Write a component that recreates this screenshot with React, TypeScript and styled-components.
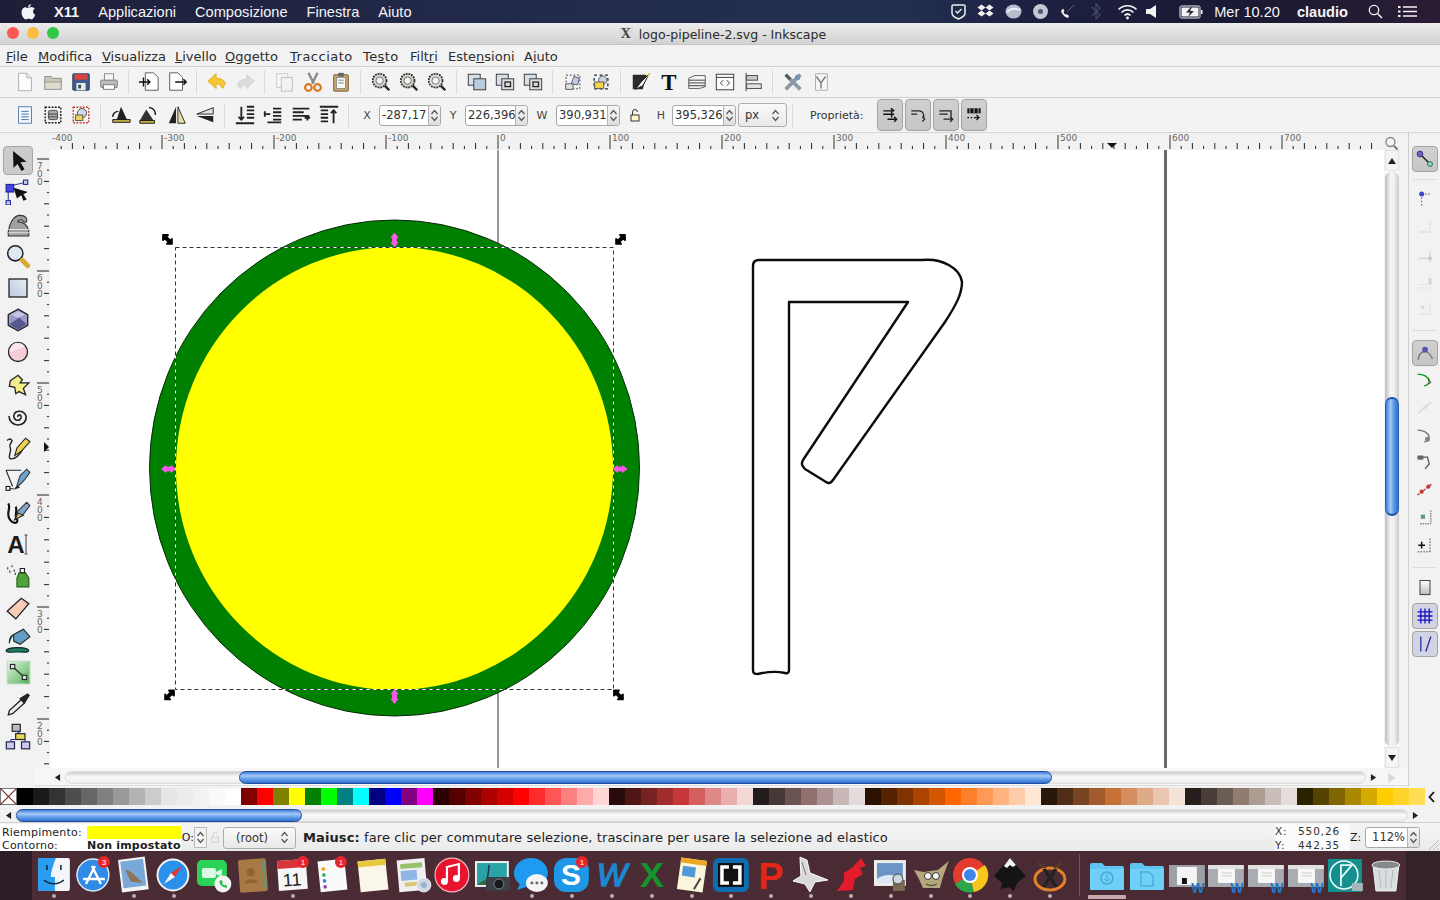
import React from 'react';
import styled, {createGlobalStyle} from 'styled-components';

const GlobalStyle = createGlobalStyle`
  html, body { margin: 0; padding: 0; background: #2a1e26; }
  * { box-sizing: border-box; }
`;

const GTK_FONT = `'DejaVu Sans', 'Liberation Sans', sans-serif`;
const MAC_FONT = `'Liberation Sans', Arial, sans-serif`;

const Screen = styled.div`
  width: 1440px;
  height: 900px;
  overflow: hidden;
  display: flex;
  flex-direction: column;
  font-family: ${GTK_FONT};
`;

/* ---------- mac menu bar ---------- */
const MacBar = styled.div`
  height: 23px;
  flex-shrink: 0;
  display: flex;
  align-items: center;
  padding-left: 20px;
  color: #f4f5f8;
  font: 14.6px ${MAC_FONT};
  background: linear-gradient(90deg, #1e1e38, #222a4b 35%, #233052 62%, #1d2040 72%, #1a1a34 85%, #2a1c34);
`;
const AppleSlot = styled.div`
  width: 22px;
  height: 18px;
  margin-right: 12px;
`;
const MacItem = styled.span<{$bold?: boolean; $gap: number}>`
  font-weight: ${p => (p.$bold ? 700 : 400)};
  margin-right: ${p => p.$gap}px;
`;
const MacSpacer = styled.div`
  flex: 1;
`;
const StatusGlyph = styled.svg<{$gap: number}>`
  flex-shrink: 0;
  margin-right: ${p => p.$gap}px;
`;

/* ---------- window ---------- */
const Win = styled.div`
  height: 828px;
  flex-shrink: 0;
  display: flex;
  flex-direction: column;
  background: #f2f2f2;
  color: #1c1c1c;
`;
const TitleBar = styled.div`
  height: 22px;
  flex-shrink: 0;
  position: relative;
  display: flex;
  align-items: center;
  justify-content: center;
  gap: 6px;
  padding: 1px 0 0 5px;
  font: 12.5px ${GTK_FONT};
  color: #2a2a2a;
  background: linear-gradient(#ececec, #d2d2d2);
  border-bottom: 1px solid #c4c4c4;
  border-radius: 4px 4px 0 0;
`;
const Lights = styled.div`
  position: absolute;
  left: 7px;
  top: 4px;
  display: flex;
  gap: 8px;
`;
const Light = styled.span<{$c: string}>`
  width: 12px;
  height: 12px;
  border-radius: 50%;
  background: ${p => p.$c};
`;
const XBadge = styled.span`
  width: 14px;
  height: 14px;
  background: #dcdcdc;
  font: 700 14px/14px 'Liberation Serif', serif;
  text-align: center;
  color: #444;
`;
const MenuRow = styled.div`
  height: 21px;
  flex-shrink: 0;
  display: flex;
  align-items: center;
  padding: 1px 0 0 6px;
  font-size: 13px;
  color: #2c2c2c;
`;
const MenuItem = styled.span<{$w: number; $ls?: number}>`
  width: ${p => p.$w}px;
  flex-shrink: 0;
  white-space: nowrap;
  letter-spacing: ${p => p.$ls ?? 0}px;
`;
const Toolbar = styled.div<{$h: number}>`
  height: ${p => p.$h}px;
  flex-shrink: 0;
  display: flex;
  align-items: center;
  position: relative;
  border-top: 1px solid #d2d2d2;
  padding-left: 11px;
  background: #f3f3f3;
`;
const Grip = styled.div`
  position: absolute;
  left: 3px;
  top: 5px;
  bottom: 5px;
  width: 6px;
  background-image: radial-gradient(#cfcfcf 40%, transparent 45%);
  background-size: 2px 2px;
`;
const Slot = styled.div`
  width: 28px;
  height: 24px;
  flex-shrink: 0;
  display: flex;
  align-items: center;
  justify-content: center;
`;
const Sep = styled.div`
  width: 12px;
  height: 24px;
  flex-shrink: 0;
  position: relative;
  &::after {
    content: '';
    position: absolute;
    left: 5px;
    top: 0;
    bottom: 0;
    width: 1px;
    background: #d9d9d9;
  }
`;
const FieldLabel = styled.span<{$w: number}>`
  width: ${p => p.$w}px;
  flex-shrink: 0;
  font-size: 11px;
  color: #444;
  text-align: center;
`;
const SpinBox = styled.div<{$w: number}>`
  width: ${p => p.$w}px;
  height: 21px;
  flex-shrink: 0;
  display: flex;
  border: 1px solid #a8a8a8;
  border-radius: 3px;
  background: #fff;
  overflow: hidden;
`;
const SpinText = styled.div<{$right?: boolean}>`
  flex: 1;
  min-width: 0;
  overflow: hidden;
  white-space: nowrap;
  padding: 0 2px;
  font-size: 11.5px;
  line-height: 19px;
  color: #333;
  text-align: ${p => (p.$right ? 'right' : 'left')};
`;
const SpinArrows = styled.div`
  width: 12px;
  flex-shrink: 0;
  border-left: 1px solid #b5b5b5;
  background: linear-gradient(#f6f6f6, #dedede);
  display: flex;
  align-items: center;
  justify-content: center;
`;
const Combo = styled.div<{$w: number; $h: number; $ml?: number; $pl?: number}>`
  width: ${p => p.$w}px;
  height: ${p => p.$h}px;
  margin-left: ${p => p.$ml ?? 0}px;
  flex-shrink: 0;
  display: flex;
  align-items: center;
  justify-content: space-between;
  padding: 0 6px 0 ${p => p.$pl ?? 6}px;
  font-size: 11.5px;
  color: #333;
  border: 1px solid #adadad;
  border-radius: 3px;
  background: linear-gradient(#f9f9f9, #e9e9e9);
`;
const LockSlot = styled.div`
  width: 30px;
  flex-shrink: 0;
  display: flex;
  justify-content: center;
`;
const PropLabel = styled.span`
  margin: 0 11px 0 11px;
  width: 56px;
  flex-shrink: 0;
  font-size: 11px;
  color: #333;
  white-space: nowrap;
`;
const PropButtons = styled.div`
  display: flex;
  gap: 2px;
`;
const ToggleBtn = styled.div<{$w: number; $h: number; $tint?: boolean}>`
  width: ${p => p.$w}px;
  height: ${p => p.$h}px;
  flex-shrink: 0;
  display: flex;
  align-items: center;
  justify-content: center;
  border: 1px solid #a3a3a3;
  border-radius: 4px;
  background: ${p => (p.$tint ? '#d3d3e4' : 'linear-gradient(#d0d0d0, #c6c6c6)')};
`;

/* ---------- work area ---------- */
const Main = styled.div`
  height: 654px;
  flex-shrink: 0;
  display: flex;
  border-top: 1px solid #d6d6d6;
`;
const ToolBox = styled.div`
  width: 34px;
  flex-shrink: 0;
  padding: 13px 0 0 1px;
  display: flex;
  flex-direction: column;
  align-items: center;
`;
const ToolCell = styled.div<{$on?: boolean}>`
  width: 30px;
  height: 32px;
  flex-shrink: 0;
  display: flex;
  align-items: center;
  justify-content: center;
  ${p => p.$on && 'height: 29px; margin-bottom: 1px; background: #cbcbcb; border: 1px solid #a5a5a5; border-radius: 4px;'}
`;
const Center = styled.div`
  width: 1374px;
  flex-shrink: 0;
  display: flex;
  flex-direction: column;
`;
const RulerRow = styled.div`
  height: 17px;
  flex-shrink: 0;
  display: flex;
`;
const ViewRow = styled.div`
  height: 618px;
  flex-shrink: 0;
  display: flex;
`;
const Paper = styled.svg`
  display: block;
  flex-shrink: 0;
  background: #fff;
`;
const RulerSvg = styled.svg`
  display: block;
  flex-shrink: 0;
`;
const VBarCol = styled.div`
  width: 14px;
  margin-left: 1px;
  flex-shrink: 0;
  display: flex;
  flex-direction: column;
  background: #fff;
`;
const ArrowCell = styled.div`
  height: 21px;
  flex-shrink: 0;
  display: flex;
  align-items: center;
  justify-content: center;
  background: #f4f4f4;
  border: 1px solid #e0e0e0;
`;
const VTrack = styled.div`
  flex: 1;
  display: flex;
  flex-direction: column;
  border-radius: 7px;
  background: linear-gradient(90deg, #bdbdbd, #f5f5f5 40%, #f0f0f0 65%, #c9c9c9);
`;
const VThumb = styled.div`
  height: 119px;
  margin-top: 226px;
  border-radius: 7px;
  border: 1px solid #2a5fb4;
  border-top: 2px solid #1d4fa8;
  border-bottom: 2px solid #1d4fa8;
  background: linear-gradient(90deg, #3f80dc, #a6c9f5 40%, #64a0ea 60%, #2f6fd0);
`;
const HBarRow = styled.div`
  height: 18px;
  flex-shrink: 0;
  display: flex;
  align-items: center;
  padding: 2px 0 0 16px;
  border-bottom: 1px solid #dcdcdc;
  background: #f6f6f6;
`;
const HArrow = styled.div<{$w: number}>`
  width: ${p => p.$w}px;
  height: 100%;
  flex-shrink: 0;
  display: flex;
  align-items: center;
  justify-content: center;
`;
const HTrack = styled.div<{$w: number}>`
  width: ${p => p.$w}px;
  height: 13px;
  flex-shrink: 0;
  display: flex;
  border-radius: 7px;
  border: 1px solid #dcdcdc;
  background: linear-gradient(#cdcdcd, #fafafa 45%, #ececec);
`;
const HThumb = styled.div<{$x: number; $w: number}>`
  width: ${p => p.$w}px;
  margin-left: ${p => p.$x}px;
  margin-top: -1px;
  height: 13px;
  border-radius: 7px;
  border: 1px solid #1f4f9c;
  background: linear-gradient(#3f7fd8, #a5c8f5 35%, #6ea6ec 60%, #2f6fd0);
`;
const RightBar = styled.div`
  flex: 1;
  display: flex;
  flex-direction: column;
  align-items: center;
  position: relative;
  padding-top: 12px;
  border-left: 1px solid #cfcfcf;
`;
const RightGrip = styled.div`
  position: absolute;
  top: 3px;
  left: 4px;
  right: 4px;
  height: 5px;
  background-image: radial-gradient(#d2d2d2 40%, transparent 45%);
  background-size: 2px 2px;
`;
const SnapCell = styled.div<{$h: number}>`
  height: ${p => p.$h}px;
  flex-shrink: 0;
  display: flex;
  align-items: center;
  justify-content: center;
`;
const Hairline = styled.div`
  width: 24px;
  height: 1px;
  background: #dcdcdc;
`;

/* ---------- palette and status ---------- */
const PaletteRow = styled.div`
  height: 20px;
  flex-shrink: 0;
  display: flex;
  align-items: center;
  padding-top: 1px;
`;
const NoColor = styled.svg`
  flex-shrink: 0;
  display: block;
`;
const Swatch = styled.div`
  width: 16px;
  height: 17px;
  flex-shrink: 0;
`;
const PaletteChevron = styled.div`
  width: 13px;
  flex-shrink: 0;
  display: flex;
  justify-content: center;
`;
const PalScroll = styled.div`
  height: 17px;
  flex-shrink: 0;
  display: flex;
  align-items: center;
  padding: 3px 0 0 2px;
  border-bottom: 1px solid #cfcfcf;
`;
const StatusBar = styled.div`
  height: 28px;
  flex-shrink: 0;
  display: flex;
  align-items: center;
  position: relative;
  padding-top: 1px;
  background: linear-gradient(#f4f4f4, #ebebeb);
`;
const StylePane = styled.div`
  width: 181px;
  height: 100%;
  flex-shrink: 0;
  position: relative;
  background: #fff;
  padding: 2px 0 0 2px;
  font-size: 11px;
  line-height: 13px;
  letter-spacing: 0.2px;
  display: grid;
  grid-template-columns: 85px 94px;
`;
const StyleSwatch = styled.div`
  height: 13px;
  background: #ffff00;
`;
const StyleNone = styled.div`
  font-weight: 700;
  white-space: nowrap;
`;
const OpacityLabel = styled.span`
  font-size: 11px;
  width: 13px;
  flex-shrink: 0;
  overflow: hidden;
  display: flex;
  justify-content: flex-end;
`;
const MiniSpin = styled.div`
  width: 13px;
  height: 21px;
  flex-shrink: 0;
  border: 1px solid #bdbdbd;
  background: #f3f3f3;
  display: flex;
  align-items: center;
  justify-content: center;
`;
const MiniLock = styled.div`
  width: 16px;
  flex-shrink: 0;
  display: flex;
  justify-content: center;
`;
const Message = styled.div`
  margin-left: 7px;
  font-size: 13px;
  letter-spacing: 0.1px;
  width: 972px;
  flex-shrink: 0;
  white-space: nowrap;
  color: #222;
`;
const CoordPane = styled.div`
  width: 75px;
  height: 100%;
  flex-shrink: 0;
  display: grid;
  grid-template-columns: 23px 1fr;
  align-content: center;
  font-size: 10.5px;
  line-height: 14px;
  letter-spacing: 0.9px;
  color: #333;
  background: #fbfbfb;
`;
const ZoomLabel = styled.span`
  width: 15px;
  flex-shrink: 0;
  font-size: 11px;
`;
const CornerGrip = styled.svg`
  position: absolute;
  right: 0;
  bottom: 0;
`;

/* ---------- dock ---------- */
const Dock = styled.div`
  height: 49px;
  flex-shrink: 0;
  display: flex;
  padding-left: 34px;
  background: linear-gradient(90deg, #2c1e26 0, #2c1e26 32px, #4b2c34 32px, #4a2b33 1406px, #33222a 1406px);
`;
const DockItem = styled.div`
  width: 39.85px;
  flex-shrink: 0;
  position: relative;
  padding-top: 4px;
  display: flex;
  justify-content: center;
`;
const DockDot = styled.span`
  position: absolute;
  bottom: 2px;
  left: 18px;
  width: 4px;
  height: 4px;
  border-radius: 50%;
  background: #b9b0b3;
`;
const DockBar = styled.span`
  position: absolute;
  bottom: 1px;
  left: 1px;
  width: 38px;
  height: 4px;
  border-radius: 1px;
  background: #c9a9ae;
`;
const DockDivider = styled.div`
  width: 1px;
  flex-shrink: 0;
  margin: 3px 7px 4px 9px;
  background: #6f5a5f;
`;

/* ---------- small drawings ---------- */
type GlyphProps = {s?: number; children: React.ReactNode};
const G = ({s = 22, children}: GlyphProps) => (
  <svg width={s} height={s} viewBox="0 0 24 24">
    {children}
  </svg>
);

const Lens = ({c = '#d8d8d8'}: {c?: string}) => (
  <>
    <circle cx="10.5" cy="10.5" r="7.5" fill={c} stroke="#333" strokeWidth="2" strokeDasharray="2 1" />
    <circle cx="10.5" cy="10.5" r="4" fill="#f4f4f4" stroke="#666" />
    <path d="M16 16l5 5" stroke="#222" strokeWidth="2.6" />
  </>
);
const Page = ({x = 5, y = 2, w = 14, h = 19}: {x?: number; y?: number; w?: number; h?: number}) => (
  <path
    d={`M${x} ${y}h${w - 5}l5 5v${h - 5}h-${w}z`}
    fill="#fff"
    stroke="#555"
  />
);
const Boxes = ({lock}: {lock?: boolean}) => (
  <>
    <rect x="2.5" y="3.5" width="13" height="12" fill="#d5e0ec" stroke="#333" />
    <rect x="8.5" y="8.5" width="13" height="12" fill={lock ? '#ddd' : '#b9cde2'} stroke="#333" />
    {lock && <rect x="12" y="12" width="6" height="5" fill="none" stroke="#222" strokeWidth="1.4" />}
  </>
);
const AlignBars = ({d}: {d: string}) => (
  <path d={d} stroke="#222" strokeWidth="2" fill="none" />
);

const topTools: (React.ReactNode | null)[][] = [
  [
    <G key="n"><path d="M5 2.5h9l5 5v14H5z" fill="#fdfdfd" stroke="#aaa" /><path d="M14 2.5v5h5" fill="#eee" stroke="#aaa" /></G>,
    <G key="o"><path d="M3 6h7l2 2h9v12H3z" fill="#c9c9b5" stroke="#888" /><path d="M3 12h18v8H3z" fill="#dedccc" stroke="#999" /></G>,
    <G key="s"><rect x="3" y="3" width="18" height="18" rx="1" fill="#3c5a8c" stroke="#273a5c" /><rect x="5" y="3.5" width="14" height="6" fill="#d8433c" /><rect x="7" y="13" width="10" height="8" fill="#e8e8e8" /><rect x="9" y="15" width="3" height="4" fill="#345" /></G>,
    <G key="p"><rect x="7" y="3" width="10" height="8" fill="#f5f5f5" stroke="#888" /><rect x="3" y="10" width="18" height="8" rx="1" fill="#bdbdbd" stroke="#777" /><rect x="6" y="15" width="12" height="5" fill="#fff" stroke="#777" /></G>,
  ],
  [
    <G key="i"><Page x={8} /><path d="M1 12h12M10 9l3 3-3 3M6 7v10" stroke="#111" strokeWidth="1.5" fill="none" /></G>,
    <G key="e"><Page x={4} /><path d="M10 12h12M19 9l3 3-3 3" stroke="#111" strokeWidth="1.6" fill="none" /></G>,
  ],
  [
    <G key="u"><path d="M2 11l9-8v5c6 0 10 3 10 6l-3 5c-2-3-3-5-7-5v5z" fill="#f5c832" stroke="#e2a726" /></G>,
    <G key="r"><path d="M22 11l-8-7v5c-5 0-10 2-10 6l3 4c2-3 3-4 7-4v4z" fill="#dcdcdc" stroke="#cfcfcf" /></G>,
  ],
  [
    <G key="c"><rect x="3" y="3" width="12" height="15" fill="#f7f7f7" stroke="#c8c8c8" /><rect x="8" y="7" width="12" height="15" fill="#f2f2f2" stroke="#bdbdbd" /></G>,
    <G key="x"><path d="M7 2l6 12M17 2l-6 12" stroke="#8a8a8a" strokeWidth="2.6" /><circle cx="7" cy="18" r="3.6" fill="none" stroke="#d8781c" strokeWidth="2.4" /><circle cx="17" cy="18" r="3.6" fill="none" stroke="#d8781c" strokeWidth="2.4" /></G>,
    <G key="v"><rect x="4" y="4" width="16" height="18" rx="1" fill="#c9a76a" stroke="#6e5a33" /><rect x="7" y="7" width="10" height="12" fill="#fbfbf5" stroke="#888" /><rect x="9" y="2" width="6" height="4" fill="#666" /><path d="M9 10h6M9 13h6" stroke="#777" /></G>,
  ],
  [
    <G key="z1"><Lens /></G>,
    <G key="z2"><Lens c="#cfd8c8" /></G>,
    <G key="z3"><Lens c="#e2e2e2" /></G>,
  ],
  [
    <G key="d"><Boxes /></G>,
    <G key="cl"><Boxes lock /></G>,
    <G key="ul"><Boxes lock /></G>,
  ],
  [
    <G key="g"><rect x="4.5" y="4.5" width="15" height="15" fill="none" stroke="#333" strokeDasharray="2 2" /><path d="M10 14l3-8 6 2-2 7z" fill="#b9cde2" stroke="#556" /><path d="M4 14h8v6H4z" fill="#e2e2e2" stroke="#555" /></G>,
    <G key="ug"><rect x="4.5" y="4.5" width="15" height="15" fill="none" stroke="#222" strokeDasharray="3 3" strokeWidth="1.4" /><circle cx="14" cy="10" r="4.5" fill="#c8d4e0" stroke="#555" /><rect x="5" y="12" width="10" height="7" fill="#f1d44a" stroke="#555" /></G>,
  ],
  [
    <G key="fs"><path d="M3 4h15l-4 16H3z" fill="#2a2a2a" /><path d="M6 20l6-8 9-9-7 13z" fill="#f2f2f2" stroke="#111" /><path d="M20 2l2 2-3 3z" fill="#e6d23c" /></G>,
    <svg key="t" width="22" height="22" viewBox="0 0 24 24"><text x="12" y="21" textAnchor="middle" fontFamily="'Liberation Serif', serif" fontWeight="700" fontSize="25" fill="#111">T</text></svg>,
    <G key="l"><path d="M3 8l6-3h12v12l-6 2H3z" fill="#f6f6f6" stroke="#555" /><path d="M3 10h18M3 13h18M3 16h18" stroke="#333" /></G>,
    <G key="xm"><rect x="2.5" y="3.5" width="19" height="17" fill="#fbfbfb" stroke="#333" /><path d="M2.5 7h19" stroke="#333" /><path d="M10 10l-3 3 3 3M14 10l3 3-3 3" stroke="#333" fill="none" /></G>,
    <G key="al"><path d="M4.500 2v20" stroke="#333" /><rect x="5" y="5" width="12" height="5" fill="#c9c9c9" stroke="#444" /><rect x="5" y="14" width="16" height="5" fill="#e5e5e5" stroke="#444" /></G>,
  ],
  [
    <G key="pr"><path d="M4 4l16 16M20 4L4 20" stroke="#8c9aa8" strokeWidth="4" /><circle cx="17" cy="7" r="3" fill="#7a93b0" /><path d="M4 4l5 5" stroke="#555" strokeWidth="3" /></G>,
    <G key="dp"><path d="M6 3h13v18H6z" fill="#f6f6f6" stroke="#aaa" /><path d="M7 6l5 7 5-7M12 13v6" stroke="#777" strokeWidth="1.5" fill="none" /></G>,
  ],
];

const objectTools: React.ReactNode[][] = [
  [
    <G key="a"><rect x="5" y="3" width="14" height="18" fill="#f5f9ff" stroke="#4a78a8" /><path d="M8 8h8M8 11h8M8 14h8M8 17h8" stroke="#3a6a9c" /></G>,
    <G key="b"><rect x="3.500" y="3.500" width="17" height="17" fill="none" stroke="#111" strokeWidth="1.500" strokeDasharray="2 1.500" /><rect x="7" y="7" width="10" height="10" rx="2" fill="#aaa" stroke="#444" /><path d="M7 11h10M7 14h10" stroke="#444" /></G>,
    <G key="c"><rect x="3.500" y="3.500" width="17" height="17" fill="none" stroke="#c0392b" strokeWidth="1.500" strokeDasharray="2 1.500" /><circle cx="13" cy="10" r="5" fill="#cddbea" stroke="#444" /><rect x="6" y="12" width="8" height="6" fill="#f0cf56" stroke="#555" /></G>,
  ],
  [
    <G key="r1"><path d="M12 3l7 15H7z" fill="#222" /><path d="M14 17h8v3H3v-3z" fill="#c8b24a" stroke="#111" /><path d="M3 14a6 6 0 016-6" fill="none" stroke="#111" strokeWidth="1.500" /></G>,
    <G key="r2"><path d="M9 6l8 12H2z" fill="#333" /><path d="M2 18h16v3H2z" fill="#c8b24a" stroke="#111" /><path d="M12 4a7 7 0 017 8" fill="none" stroke="#111" strokeWidth="1.500" /></G>,
    <G key="f1"><path d="M11 3v18H3z" fill="#222" /><path d="M13 3v18h8z" fill="#e8dfa8" stroke="#222" /></G>,
    <G key="f2"><path d="M21 4v7H3z" fill="#e0e0e0" stroke="#222" /><path d="M21 20v-7H3z" fill="#222" /></G>,
  ],
  [
    <G key="a1"><AlignBars d="M14 3h8M14 7h8M14 11h8M14 15h8M8 3v14M5 14l3 3 3-3M2 21h20" /></G>,
    <G key="a2"><AlignBars d="M12 5h9M12 9h9M12 13h9M12 17h9M3 11h6M3 8v6M6 20h15" /></G>,
    <G key="a3"><AlignBars d="M3 5h18M3 9h12M3 13h18M3 17h10M16 15h6M19 12v6" /></G>,
    <G key="a4"><AlignBars d="M2 3h20M3 7h8M3 11h8M3 15h8M3 19h8M17 21V7M14 10l3-3 3 3" /></G>,
  ],
];

const pathModes = [
  <G key="1" s={20}><path d="M4 7h13M4 11h13M13 4l4 3M9 17h11M17 14l3 3-3 3M14 7v8" stroke="#111" strokeWidth="1.700" fill="none" /></G>,
  <G key="2" s={20}><path d="M4 7h9c5 0 6 3 6 9M4 11h7M17 14l3 3-3 3" stroke="#222" strokeWidth="1.500" fill="none" /></G>,
  <G key="3" s={20}><path d="M4 7h14v8M4 11h10M9 17h11M17 14l3 3-3 3" stroke="#222" strokeWidth="1.600" fill="none" /></G>,
  <G key="4" s={20}><rect x="4" y="4" width="16" height="6" fill="#111" /><path d="M7 4v6M12 4v6M17 4v6" stroke="#ccc" /><path d="M4 15h2M8 15h2M12 15h5M15 12l3 3-3 3" stroke="#111" strokeWidth="1.500" fill="none" /></G>,
];

const toolIcons: React.ReactNode[] = [
  <G key="sel" s={24}><path d="M7 2l.5 17 4-4 4 7 3-1.800-4-7 6-.500z" fill="#111" /></G>,
  <G key="node" s={26}><path d="M3 7l16-4M3 7v14" stroke="#34a" fill="none" /><rect x="1" y="5" width="7" height="7" fill="#44e" stroke="#228" /><rect x="17" y="1" width="4" height="4" fill="#ccd" stroke="#22a" /><rect x="1" y="20" width="4" height="4" fill="#ccd" stroke="#22a" /><path d="M8 8l13 4-4 2 3 5-3 1-2-5-4 3z" fill="#111" /></G>,
  <G key="tweak" s={26}><path d="M3 19c1-8 5-15 11-15 5 0 7 3 6 6-2 1-4-1-5-2-2 0-3 1-3 2 3 0 8 1 10 8v5H3z" fill="#a0a0a0" stroke="#333" /><path d="M3 17h20M3 20h20" stroke="#e2e2e2" /></G>,
  <G key="zoom" s={26}><circle cx="9.500" cy="9.500" r="7" fill="#dfe9f5" stroke="#222" strokeWidth="1.400" /><path d="M14.500 14.500l2 2" stroke="#222" strokeWidth="1.400" /><path d="M16 16l5 5" stroke="#d9a93a" strokeWidth="4.500" strokeLinecap="round" /></G>,
  <G key="rect" s={24}><defs><linearGradient id="rg" x1="0" y1="1" x2="1" y2="0"><stop offset="0" stopColor="#b9c9dc" /><stop offset="1" stopColor="#e6edf5" /></linearGradient></defs><rect x="3" y="3" width="18" height="18" fill="url(#rg)" stroke="#222" strokeWidth="1.300" /></G>,
  <G key="box" s={26}><path d="M12 2l9 5v10l-9 5-9-5V7z" fill="#9b9bc8" stroke="#222" strokeWidth="1.200" /><path d="M4 16l9-6 7 6-8 5z" fill="#57578f" /><path d="M5 7l7-3 7 3-7 3z" fill="#c6c6e2" /></G>,
  <G key="ell" s={24}><circle cx="12" cy="12" r="9.500" fill="#f7cdd8" stroke="#222" strokeWidth="1.300" /><path d="M4 12a8 8 0 0115-5" fill="#fbe6ec" /></G>,
  <G key="star" s={26}><path d="M5 9l7-5 4 4-2 3 8 0-5 5 2 6-6-3-3 2-1-6-5-1z" fill="#f2ec8a" stroke="#222" strokeWidth="1.200" /></G>,
  <G key="spiral" s={24}><path d="M12 13c-1-2 2-3 3-1 1 3-2 5-5 4-3-2-3-6 0-8 4-2 9 0 10 4 1 5-3 9-8 9s-9-4-9-9" fill="none" stroke="#222" strokeWidth="1.600" /></G>,
  <G key="pencil" s={26}><path d="M2 5c3-3 6 0 3 3-2 3 1 3 0 7s-2 7 1 7 7-3 10-8" fill="none" stroke="#222" strokeWidth="1.300" /><path d="M9 19l2-7 8-9 4 3-8 9z" fill="#f0d050" stroke="#222" /></G>,
  <G key="pen" s={26}><path d="M1 3h14M1 3l6 15M2 20h6" stroke="#222" fill="none" /><rect x="1" y="18" width="3.500" height="3.500" fill="#fff" stroke="#111" /><path d="M11 17l3-9 6-6 3 3-5 7-6 6z" fill="#6ea6c8" stroke="#334" /><path d="M8 21l3-4 3 2z" fill="#222" /></G>,
  <G key="cal" s={26}><path d="M3 4c2 3 0 6 0 10s3 8 6 8 3-3 1-6c0-3 1-6 0-9" fill="none" stroke="#111" strokeWidth="2" /><path d="M9 19l3-8 8-8 3 3-6 8z" fill="#7fa5c8" stroke="#334" /><path d="M9 19l3-6 5 2z" fill="#e0c070" stroke="#222" /></G>,
  <svg key="text" width="26" height="26" viewBox="0 0 26 26"><text x="11" y="22" textAnchor="middle" fontFamily="'Liberation Sans', sans-serif" fontWeight="700" fontSize="24" fill="#1c1c1c">A</text><path d="M21 4v19M19.500 4h3M19.500 23h3" stroke="#444" strokeWidth="1" /></svg>,
  <G key="spray" s={26}><path d="M2 5h1M6 3h1M4 8h1M8 7h1M9 10h1" stroke="#333" strokeWidth="2" /><path d="M13 9h6l3 5v8H11v-8z" fill="#4fa33a" stroke="#1f5c18" /><path d="M14 5h4v4h-4z" fill="none" stroke="#222" /></G>,
  <G key="eraser" s={26}><path d="M2 15L15 3l7 5-12 14z" fill="#f7cdb8" stroke="#222" strokeWidth="1.200" /></G>,
  <G key="bucket" s={26}><path d="M8 7l9-5 6 7-9 7-6-3z" fill="#5f9dc2" stroke="#222" /><path d="M8 7c-3 1-4 5-4 8M1 22c0-2 6-3 11-3s10 1 10 3-6 1-10 1-11 1-11-1z" fill="#1e7d5c" stroke="#123" /></G>,
  <G key="grad" s={26}><defs><linearGradient id="gg" x1="1" y1="1" x2="0" y2="0"><stop offset="0" stopColor="#4caf50" /><stop offset="1" stopColor="#e8f5e8" /></linearGradient></defs><rect x="2" y="2" width="21" height="21" fill="url(#gg)" stroke="#c5d5c5" /><path d="M7 7l11 10" stroke="#444" strokeWidth="1.400" /><rect x="5" y="5" width="4" height="4" fill="#ddd" stroke="#222" /><rect x="16" y="15" width="4" height="4" fill="#ddd" stroke="#222" /></G>,
  <G key="drop" s={26}><path d="M3 22l1-4L15 8l3 3L7 21z" fill="#eee" stroke="#222" strokeWidth="1.200" /><path d="M13 7l8-5 2 2-5 8z" fill="#222" /></G>,
  <G key="conn" s={28}><rect x="7" y="2" width="7" height="6" fill="#b9b9c8" stroke="#222" /><rect x="10" y="10" width="8" height="5" fill="#e6d95a" stroke="#222" /><rect x="2" y="17" width="7" height="6" fill="#c9c9ee" stroke="#224" /><rect x="15" y="17" width="7" height="6" fill="#c9c9ee" stroke="#224" /><path d="M11 8l3 2M6 17v-2h4M18 17v-2" stroke="#33a" fill="none" /></G>,
];

const Tri = ({dir, c = '#222', s = 8}: {dir: 'u' | 'd' | 'l' | 'r'; c?: string; s?: number}) => {
  const d = {u: 'M4 1l4 6H0z', d: 'M4 7L0 1h8z', l: 'M1 4l6-4v8z', r: 'M7 4L1 0v8z'}[dir];
  return (
    <svg width={s} height={s} viewBox="0 0 8 8">
      <path d={d} fill={c} />
    </svg>
  );
};

const Updown = ({h = 15}: {h?: number}) => (
  <svg width="9" height={h} viewBox="0 0 9 15">
    <path d="M1.500 6l3-3.500 3 3.500M1.500 9l3 3.500 3-3.500" fill="none" stroke="#555" strokeWidth="1.200" />
  </svg>
);

const snapIcons: {h: number; on?: 'gray' | 'tint'; el: React.ReactNode}[] = [
  {h: 28, on: 'gray', el: <G s={20}><path d="M6 6l12 12" stroke="#111" strokeWidth="1.500" /><circle cx="6" cy="6" r="3.500" fill="#7a5ac8" stroke="#33286a" /><circle cx="18" cy="18" r="3" fill="#9cc" stroke="#264" /></G>},
  {h: 12, el: <Hairline />},
  {h: 28, el: <G s={20}><path d="M8 6h12" stroke="#444" strokeDasharray="2 2" /><path d="M8 6v16" stroke="#339" strokeDasharray="2 2" /><circle cx="8" cy="6" r="3" fill="#44c" /></G>},
  {h: 28, el: <G s={20}><path d="M18 4v14H6" stroke="#ddd" strokeWidth="1.600" fill="none" strokeDasharray="3 1" /></G>},
  {h: 28, el: <G s={20}><path d="M4 16h14M18 8v12" stroke="#d3d3d3" strokeWidth="1.600" /><circle cx="18" cy="16" r="2.500" fill="#ccc" /></G>},
  {h: 28, el: <G s={20}><path d="M4 18h14M4 14h14" stroke="#ddd" strokeDasharray="3 1" /><rect x="16" y="6" width="4" height="8" fill="#d5d5d5" /></G>},
  {h: 24, el: <G s={20}><path d="M18 4v14H6" stroke="#dcdcdc" fill="none" /><rect x="7" y="8" width="4" height="4" fill="#d9d9d9" /></G>},
  {h: 18, el: <Hairline />},
  {h: 27, on: 'gray', el: <G s={20}><path d="M4 20c0-8 6-10 8-10s6 3 9 9" stroke="#777" strokeWidth="1.600" fill="none" /><circle cx="12" cy="8" r="3.500" fill="#55a" /></G>},
  {h: 28, el: <G s={20}><path d="M3 5c7 0 13 3 14 8 0 4-3 6-6 6" stroke="#191" strokeWidth="1.600" fill="none" /><path d="M16 11l3 4-4 2" stroke="#222" fill="none" /></G>},
  {h: 28, el: <G s={20}><path d="M4 18L19 5" stroke="#dcdcdc" strokeWidth="2" /><circle cx="12" cy="11" r="2" fill="#ddd" /></G>},
  {h: 28, el: <G s={20}><path d="M3 5c7 0 13 3 14 8 0 4-3 6-6 6" stroke="#777" strokeWidth="1.600" fill="none" /><circle cx="15" cy="16" r="3" fill="#7a8a80" /></G>},
  {h: 26, el: <G s={20}><path d="M3 5h12l2 8-5 6" stroke="#555" strokeWidth="1.600" fill="none" /><path d="M3 3h7v5H3z" fill="#666" /></G>},
  {h: 28, el: <G s={20}><path d="M3 18L20 5" stroke="#a33" strokeWidth="1.500" strokeDasharray="3 1.500" /><circle cx="8" cy="14" r="2.500" fill="#c33" /><circle cx="16" cy="8" r="2.500" fill="#c33" /></G>},
  {h: 28, el: <G s={20}><path d="M19 3v16H6" stroke="#444" fill="none" strokeDasharray="2 1" /><rect x="7" y="8" width="5" height="5" fill="#5a9a88" /></G>},
  {h: 28, el: <G s={20}><path d="M4 11h8M8 7v8" stroke="#111" strokeWidth="1.800" /><path d="M18 3v16M3 19h15" stroke="#333" fill="none" strokeDasharray="2 1.500" /></G>},
  {h: 14, el: <Hairline />},
  {h: 28, el: <G s={20}><defs><linearGradient id="pgb" x1="0" y1="0" x2="0" y2="1"><stop offset="0" stopColor="#fff" /><stop offset="1" stopColor="#bbb" /></linearGradient></defs><rect x="6" y="3" width="12" height="17" fill="url(#pgb)" stroke="#222" /></G>},
  {h: 28, on: 'tint', el: <G s={20}><path d="M3 7h18M3 12h18M3 17h18M7 3v18M12 3v18M17 3v18" stroke="#1212c0" strokeWidth="1.600" /></G>},
  {h: 28, on: 'tint', el: <G s={20}><path d="M7 3v18M13 21L19 3" stroke="#1a2a9a" strokeWidth="1.500" /></G>},
];

const ramps = [
  ['#000000', '#1a1a1a', '#333333', '#4d4d4d', '#666666', '#808080', '#999999', '#b3b3b3', '#cccccc', '#e6e6e6', '#ececec', '#f2f2f2', '#f9f9f9', '#ffffff'],
  ['#800000', '#ff0000', '#808000', '#ffff00', '#008000', '#00ff00', '#008080', '#00ffff', '#000080', '#0000ff', '#800080', '#ff00ff'],
  ['#2b0000', '#550000', '#800000', '#aa0000', '#d40000', '#ff0000', '#ff2a2a', '#ff5555', '#ff8080', '#ffaaaa', '#ffd5d5'],
  ['#280b0b', '#501616', '#782121', '#a02c2c', '#c83737', '#d35f5f', '#de8787', '#e9afaf', '#f4d7d7'],
  ['#241c1c', '#483737', '#6c5353', '#916f6f', '#ac9393', '#c8b7b7', '#e3dbdb'],
  ['#2b1100', '#552200', '#803300', '#aa4400', '#d45500', '#ff6600', '#ff7f2a', '#ff9955', '#ffb380', '#ffccaa', '#ffe6d5'],
  ['#28170b', '#502d16', '#784421', '#a05a2c', '#c87137', '#d38d5f', '#deaa87', '#e9c6af', '#f4e3d7'],
  ['#241f1c', '#483e37', '#6c5d53', '#917c6f', '#ac9d93', '#c8beb7', '#e3dedb'],
  ['#2b2200', '#554400', '#806600', '#aa8800', '#d4aa00', '#ffcc00', '#ffd42a', '#ffdd55'],
].flat();

/* ---------- rulers ---------- */
const HRuler = () => {
  const ticks = [];
  for (let i = -39; i <= 78; i++) {
    const x = 498 + i * 11.2;
    if (x > 1374) break;
    const top = i % 10 === 0 ? 135 : i % 2 === 0 ? 143 : 146;
    ticks.push(<line key={i} x1={x} x2={x} y1={top} y2={149} stroke={i % 10 === 0 ? '#333' : '#222'} strokeWidth="1" />);
    if (i % 10 === 0) {
      ticks.push(
        <text key={`t${i}`} x={x + 2} y={141} fontSize="9" fill="#666" fontFamily={GTK_FONT}>
          {i * 10}
        </text>,
      );
    }
  }
  return (
    <RulerSvg width={1358} height={17} viewBox="50 133 1358 17">
      <text x={52} y={141} fontSize="9" fill="#666" fontFamily={GTK_FONT}>-400</text>
      {ticks}
      <path d="M1107 143h10l-5 5z" fill="#111" />
      <circle cx="1390.500" cy="142" r="4.500" fill="#f2f2f2" stroke="#888" strokeWidth="1.400" />
      <path d="M1394 146l3.500 3.500" stroke="#777" strokeWidth="2" />
    </RulerSvg>
  );
};

const VRuler = () => {
  const ticks = [];
  for (let i = 0; i < 56; i++) {
    const y = 159 + i * 11.2;
    const left = i % 10 === 0 ? 37 : i % 2 === 0 ? 44 : 47;
    ticks.push(<line key={i} x1={left} x2={49} y1={y} y2={y} stroke="#222" />);
    if (i % 10 === 0) {
      const label = String(700 - i * 10);
      label.split('').forEach((ch, k) => {
        ticks.push(
          <text key={`${i}-${k}`} x={37} y={y + 10 + k * 8} fontSize="9" fill="#666" fontFamily={GTK_FONT}>
            {ch}
          </text>,
        );
      });
    }
  }
  return (
    <RulerSvg width={16} height={618} viewBox="34 150 16 618">
      {ticks}
      <path d="M44 442l5 5-5 5z" fill="#111" />
    </RulerSvg>
  );
};

/* ---------- selection handles ---------- */
const CornerHandle = ({x, y, flip}: {x: number; y: number; flip?: boolean}) => (
  <g transform={`translate(${x} ${y}) ${flip ? 'scale(-1 1)' : ''}`}>
    <path d="M-5.500 -5.500h5l-1.700 1.700 3.900 3.900 1.700-1.700v5h-5l1.700-1.700-3.900-3.900-1.700 1.700z" fill="#000" stroke="#000" strokeWidth="1.800" strokeLinejoin="round" />
  </g>
);
const VHandle = ({x, y}: {x: number; y: number}) => (
  <path d={`M${x} ${y - 7}l3.500 4.500h-1.500v5h1.500l-3.500 4.500-3.500-4.500h1.500v-5h-1.500z`} fill="#ff55ee" stroke="#ff55ee" strokeWidth="0.800" />
);
const HHandle = ({x, y}: {x: number; y: number}) => (
  <path d={`M${x - 7} ${y}l4.500-3.500v1.500h5v-1.500l4.500 3.500-4.500 3.500v-1.500h-5v1.500z`} fill="#ff55ee" stroke="#ff55ee" strokeWidth="0.800" />
);

const Drawing = () => (
  <Paper width={1334} height={618} viewBox="50 150 1334 618">
    <line x1="498" x2="498" y1="150" y2="768" stroke="#333" strokeWidth="1" />
    <rect x="1164" y="150" width="3" height="618" fill="#6a6a6a" />
    <ellipse cx="394.500" cy="468" rx="245" ry="248" fill="#008000" stroke="#0a2a0a" strokeWidth="1" />
    <ellipse cx="394.500" cy="468.500" rx="218.500" ry="221.500" fill="#ffff00" />
    <rect x="175.500" y="247.500" width="438" height="442" fill="none" stroke="#fff" strokeWidth="1" />
    <rect x="175.500" y="247.500" width="438" height="442" fill="none" stroke="#333" strokeWidth="1" strokeDasharray="4 3" />
    <path
      d="M759 260C755 260 753 262 753 266L753 670C753 674 755 674 758 674C766 672 776 671 785 673C788 674 789 672 789 670L789 302L908 302L803 460C801 464 802 466 805 469L826 482C829 484 831 483 833 480L945 322C956 305 962 294 962 282C960 268 942 258 922 260Z"
      fill="#fff"
      stroke="#0c0c0c"
      strokeWidth="2.400"
      strokeLinejoin="round"
    />
    <CornerHandle x={168.500} y={240.500} />
    <CornerHandle x={619.500} y={240.500} flip />
    <CornerHandle x={168.500} y={696} flip />
    <CornerHandle x={619.500} y={696} />
    <VHandle x={394.500} y={240} />
    <VHandle x={394.500} y={696.500} />
    <HHandle x={168.500} y={469} />
    <HHandle x={620} y={469} />
  </Paper>
);

/* ---------- dock icons ---------- */
const D = ({children}: {children: React.ReactNode}) => (
  <svg width="40" height="40" viewBox="0 0 40 40">
    {children}
  </svg>
);
const Badge = ({x, y, n}: {x: number; y: number; n: string}) => (
  <>
    <circle cx={x} cy={y} r="6" fill="#e8262a" />
    <text x={x} y={y + 3} textAnchor="middle" fontSize="8" fill="#fff" fontFamily={MAC_FONT}>{n}</text>
  </>
);
const Folder = ({children}: {children?: React.ReactNode}) => (
  <>
    <path d="M3 10q0-2 2-2h10l3 3h18q1 0 1 2v21q0 1-2 1H4q-1 0-1-1z" fill="#5ec5f2" />
    <path d="M3 14h34v20q0 1-2 1H4q-1 0-1-1z" fill="#6ecff7" />
    {children}
  </>
);
const StackDoc = () => (
  <>
    <rect x="2" y="10" width="36" height="22" fill="#a9adb3" />
    <rect x="2" y="10" width="36" height="4" fill="#e2e2e2" />
    <rect x="12" y="14" width="17" height="14" fill="#f8f8f8" />
    <path d="M16 18h10M16 21h10" stroke="#ccc" />
    <text x="31" y="38" textAnchor="middle" fontSize="14" fontWeight="700" fill="#1e78c8" fontFamily={MAC_FONT}>W</text>
  </>
);

const dockApps: {key: string; dot?: boolean; el: React.ReactNode}[] = [
  {key: 'finder', dot: true, el: <D><rect x="4" y="3" width="32" height="33" rx="2" fill="#f2f6fa" /><path d="M6 3h16c-3 8-5 14-5 19h4v14H6q-2 0-2-2V5q0-2 2-2z" fill="#2a9df0" /><path d="M13 10v5M27 10v5M10 25c6 5 14 5 20 0" stroke="#123" strokeWidth="1.500" fill="none" /></D>},
  {key: 'appstore', el: <D><circle cx="19" cy="20" r="16" fill="#2f8ae8" stroke="#dfeaf6" strokeWidth="1.500" /><path d="M12 29L21 11M27 29L18 11M9 24h22" stroke="#fff" strokeWidth="2.400" /><Badge x={30} y={7} n="3" /></D>},
  {key: 'preview', dot: true, el: <D><g transform="rotate(-7 20 20)"><rect x="6" y="3" width="27" height="33" fill="#f4f4f4" /><rect x="8" y="5" width="23" height="27" fill="#7aa8d8" /><path d="M12 14c5 0 10 8 16 15l-12-3z" fill="#8c7458" /></g></D>},
  {key: 'safari', dot: true, el: <D><circle cx="19" cy="20" r="16.500" fill="#f2f2f2" /><circle cx="19" cy="20" r="14.500" fill="#2a90ec" /><path d="M28 11l-7 11-4-4z" fill="#e8342c" /><path d="M10 29l7-11 4 4z" fill="#f5f5f5" /></D>},
  {key: 'facetime', el: <D><rect x="4" y="5" width="30" height="26" rx="5" fill="#28d358" /><rect x="9" y="13" width="14" height="10" rx="2" fill="#dff7e5" /><path d="M23 17l6-3v8l-6-3z" fill="#dff7e5" /><circle cx="30" cy="29" r="8.500" fill="#f4f4f4" /><path d="M26.500 26c0 4 3 6 7 7l1-2-2-1.500-1 1c-1-.5-2-1.500-2.500-2.500l1-1-1.500-2z" fill="#28c050" /></D>},
  {key: 'contacts', el: <D><g transform="rotate(-4 20 20)"><rect x="6" y="4" width="28" height="33" rx="2" fill="#a77a45" /><rect x="30" y="7" width="3" height="27" fill="#6e8f78" /><circle cx="18" cy="17" r="4" fill="#8d6534" /><path d="M11 28c1-5 13-5 14 0z" fill="#8d6534" /></g></D>},
  {key: 'calendar', dot: true, el: <D><g transform="rotate(-4 19 21)"><rect x="5" y="5" width="29" height="30" fill="#f6f6f6" /><rect x="5" y="5" width="29" height="8" fill="#d8343a" /><text x="19" y="31" textAnchor="middle" fontSize="18" fill="#222" fontFamily={MAC_FONT}>11</text></g><Badge x={30} y={7} n="1" /></D>},
  {key: 'reminders', el: <D><g transform="rotate(-6 20 20)"><rect x="6" y="5" width="27" height="31" fill="#fafafa" /><circle cx="11" cy="13" r="1.800" fill="#f39c12" /><circle cx="11" cy="19" r="1.800" fill="#27ae60" /><circle cx="11" cy="25" r="1.800" fill="#2e86de" /><circle cx="11" cy="31" r="1.800" fill="#8e44ad" /></g><Badge x={28} y={7} n="1" /></D>},
  {key: 'notes', el: <D><g transform="rotate(-6 20 20)"><rect x="6" y="5" width="28" height="31" fill="#faf7ea" /><rect x="6" y="5" width="28" height="6" fill="#e8c83c" /></g></D>},
  {key: 'sysprefs', el: <D><g transform="rotate(-5 20 20)"><rect x="5" y="4" width="28" height="32" fill="#f0f0f0" /><rect x="8" y="8" width="22" height="5" fill="#97c26a" /><rect x="8" y="15" width="16" height="10" fill="#8fb7e6" /><rect x="11" y="27" width="15" height="4" fill="#d8c77a" /></g><circle cx="31" cy="30" r="7" fill="#d2d8e0" stroke="#eef" /><circle cx="31" cy="30" r="3" fill="#9bb3d0" /></D>},
  {key: 'itunes', el: <D><circle cx="20" cy="20" r="17" fill="#e8132f" stroke="#f4b6bc" strokeWidth="1.200" /><path d="M15 26V12l12-3v14" stroke="#fff" strokeWidth="2.200" fill="none" /><circle cx="12.500" cy="26.500" r="3.500" fill="#fff" /><circle cx="24.500" cy="23.500" r="3.500" fill="#fff" /></D>},
  {key: 'iphoto', el: <D><rect x="3" y="6" width="34" height="26" fill="#f0f0f0" /><rect x="5" y="8" width="30" height="22" fill="#2aa3a8" /><path d="M5 30c6-6 14-8 30-6v6z" fill="#2a6e42" /><path d="M17 10c0 6-1 10-2 16" stroke="#234" strokeWidth="1.500" fill="none" /><rect x="14" y="22" width="24" height="14" rx="2" fill="#3c4046" /><circle cx="27" cy="29" r="5" fill="#15181c" stroke="#7a7f88" /></D>},
  {key: 'messages', dot: true, el: <D><ellipse cx="19" cy="18" rx="17" ry="15" fill="#1e9af0" /><path d="M8 29l-3 6 9-3z" fill="#1e9af0" /><ellipse cx="25" cy="28" rx="11" ry="9" fill="#f4f4f4" /><circle cx="20" cy="28" r="1.500" fill="#666" /><circle cx="25" cy="28" r="1.500" fill="#666" /><circle cx="30" cy="28" r="1.500" fill="#666" /></D>},
  {key: 'skype', dot: true, el: <D><rect x="2" y="3" width="35" height="34" rx="12" fill="#1e97e6" /><text x="19" y="30" textAnchor="middle" fontSize="30" fontWeight="700" fill="#fff" fontFamily={MAC_FONT}>S</text><Badge x={30} y={7} n="1" /></D>},
  {key: 'word', dot: true, el: <D><text x="20" y="31" textAnchor="middle" fontSize="32" fontWeight="400" fontStyle="italic" stroke="#1d86d0" strokeWidth="1.500" fill="#1d86d0" fontFamily={MAC_FONT}>W</text></D>},
  {key: 'excel', dot: true, el: <D><text x="20" y="32" textAnchor="middle" fontSize="36" fontWeight="700" fill="#13942e" fontFamily={MAC_FONT}>X</text></D>},
  {key: 'pages', dot: true, el: <D><g transform="rotate(8 20 20)"><rect x="7" y="4" width="26" height="32" fill="#fbf5dc" /><rect x="7" y="4" width="26" height="5" fill="#eda820" /><rect x="10" y="12" width="13" height="10" fill="#4f9ad8" /><path d="M24 34l5-12" stroke="#444" strokeWidth="2" /></g></D>},
  {key: 'brackets', dot: true, el: <D><rect x="2" y="3" width="36" height="34" rx="6" fill="#0f6cb0" /><rect x="7" y="8" width="26" height="24" fill="#111" /><path d="M18 12h-7v16h7M22 12h7v16h-7" stroke="#fff" strokeWidth="3.500" fill="none" /></D>},
  {key: 'pdf', dot: true, el: <D><text x="20" y="34" textAnchor="middle" fontSize="38" fontWeight="700" fill="#e42518" fontFamily={MAC_FONT}>P</text></D>},
  {key: 'rhino', dot: true, el: <D><path d="M9 2l7 3 3 13 18 7-13 2-5 10-5-8-12-3 8-5z" fill="#d9d9d9" stroke="#fff" /><path d="M11 7l4 13" stroke="#777" /></D>},
  {key: 'bird', dot: true, el: <D><path d="M30 3l5 8-6 2 3 6-8 5-2 11-16 1 7-10 0-8 9-6z" fill="#e31c2c" /></D>},
  {key: 'iphoto2', dot: true, el: <D><rect x="3" y="5" width="32" height="26" fill="#eee" /><rect x="6" y="8" width="26" height="20" fill="#6c95c6" /><path d="M6 24c8-6 17-4 26-1v5H6z" fill="#dfe8f2" /><rect x="22" y="25" width="12" height="11" fill="#7a6a52" /><circle cx="27" cy="24" r="5" fill="#ccd7e2" stroke="#444" /></D>},
  {key: 'gimp', dot: true, el: <D><path d="M3 15l10 2 6-1 8-1 11-9-6 16-3 11H12l-4-9z" fill="#b4a77c" /><circle cx="17" cy="21" r="3.500" fill="#f2f2f2" stroke="#333" /><circle cx="25" cy="21" r="3.500" fill="#f2f2f2" stroke="#333" /><path d="M15 29c3 2 8 2 11 0" stroke="#333" fill="none" /></D>},
  {key: 'chrome', dot: true, el: <D><circle cx="20" cy="20" r="17" fill="#e33b2e" /><path d="M20 20L5 29a17 17 0 0 0 19 8z" fill="#2ba84a" /><path d="M20 20l4 17a17 17 0 0 0 11-27z" fill="#f8c51c" /><circle cx="20" cy="20" r="8" fill="#fff" /><circle cx="20" cy="20" r="6" fill="#3f84e8" /></D>},
  {key: 'inkscape', dot: true, el: <D><path d="M20 3l16 18-9 7-3 8-5-4-8 2 1-6-8-7z" fill="#141414" /><path d="M20 3l6 7-3 2-3-2-3 3-3-2z" fill="#f2f2f2" /></D>},
  {key: 'x11', dot: true, el: <D><ellipse cx="20" cy="24" rx="15" ry="11" fill="none" stroke="#e0822a" strokeWidth="3" /><text x="20" y="32" textAnchor="middle" fontSize="25" fontWeight="700" fill="#222" fontFamily={MAC_FONT}>X</text><path d="M8 8l8 5M32 8l-8 5" stroke="#5a3a20" strokeWidth="2.500" /></D>},
];

const dockStacks: {key: string; bar?: boolean; el: React.ReactNode}[] = [
  {key: 'downloads', bar: true, el: <D><Folder><circle cx="20" cy="23" r="6" fill="none" stroke="#45a8d8" strokeWidth="1.500" /><path d="M20 19v7M17 23.500l3 3 3-3" stroke="#45a8d8" fill="none" /></Folder></D>},
  {key: 'docs', el: <D><Folder><path d="M14 17h8l4 4v10H14z" fill="none" stroke="#4bb0df" strokeWidth="1.500" /></Folder></D>},
  {key: 'w1', el: <D><rect x="2" y="10" width="36" height="22" fill="#9da1a7" /><rect x="10" y="12" width="20" height="18" fill="#f4f4f4" /><rect x="15" y="23" width="5" height="6" fill="#111" /><text x="31" y="38" textAnchor="middle" fontSize="14" fontWeight="700" fill="#1e78c8" fontFamily={MAC_FONT}>W</text></D>},
  {key: 'w2', el: <D><StackDoc /></D>},
  {key: 'w3', el: <D><StackDoc /></D>},
  {key: 'w4', el: <D><StackDoc /></D>},
  {key: 'pipeline', el: <D><rect x="2" y="4" width="34" height="33" fill="#14908f" /><circle cx="18" cy="20" r="14" fill="none" stroke="#eafafa" strokeWidth="1.600" /><path d="M15 31V10h11l-11 13" fill="none" stroke="#eafafa" strokeWidth="1.800" /><rect x="26" y="28" width="11" height="8" fill="#a9b4ba" /></D>},
  {key: 'trash', el: <D><path d="M7 10h26l-3 26H10z" fill="#d8dde0" stroke="#f2f2f2" /><ellipse cx="20" cy="10" rx="14" ry="4" fill="#85898c" stroke="#e9e9e9" /><path d="M13 15l2 18M20 15v18M27 15l-2 18" stroke="#b5babd" /></D>},
];

const Field = ({label, lw, w, text}: {label: string; lw: number; w: number; text: string}) => (
  <>
    <FieldLabel $w={lw}>{label}</FieldLabel>
    <SpinBox $w={w}>
      <SpinText>{text}</SpinText>
      <SpinArrows>
        <Updown />
      </SpinArrows>
    </SpinBox>
  </>
);

const menus: [React.ReactNode, number, number?][] = [
  [<><u>F</u>ile</>, 32],
  [<><u>M</u>odifica</>, 64],
  [<><u>V</u>isualizza</>, 73],
  [<><u>L</u>ivello</>, 50],
  [<><u>O</u>ggetto</>, 65],
  [<><u>T</u>racciato</>, 73, 0.5],
  [<>Te<u>s</u>to</>, 47, 0.4],
  [<>Filt<u>r</u>i</>, 38],
  [<>Este<u>n</u>sioni</>, 76],
  [<>A<u>i</u>uto</>, 50],
];

export default function App() {
  return (
    <Screen>
      <GlobalStyle />
      <MacBar>
        <AppleSlot>
          <svg width="16" height="18" viewBox="0 0 16 18">
            <path d="M11 1c0 2-2 3.500-3 3.400C8 3 9.500 1.200 11 1zM8 5c1 0 2-1 3.500-1 1.300 0 2.500.7 3.200 1.800-2.500 1.500-2 5 .6 6-.7 2-2.300 4.700-3.800 4.700-1 0-1.500-.7-2.800-.7s-1.800.7-2.800.7C4 16.500 1.500 12.500 1.500 9.500 1.500 6 3.700 4.200 5.500 4.200 6.500 4.200 7.300 5 8 5z" fill="#f4f5f8" />
          </svg>
        </AppleSlot>
        <MacItem $bold $gap={19}>X11</MacItem>
        <MacItem $gap={19}>Applicazioni</MacItem>
        <MacItem $gap={19}>Composizione</MacItem>
        <MacItem $gap={19}>Finestra</MacItem>
        <MacItem $gap={0}>Aiuto</MacItem>
        <MacSpacer />
        <StatusGlyph $gap={10} width="17" height="17" viewBox="0 0 17 17"><path d="M3 2h11a1 1 0 011 1v7c0 3-4 5-6.500 6C6 15 2 13 2 10V3a1 1 0 011-1z" fill="none" stroke="#eee" strokeWidth="1.500" /><path d="M5.500 8l2 2 4-4" stroke="#eee" strokeWidth="1.400" fill="none" /></StatusGlyph>
        <StatusGlyph $gap={11} width="17" height="17" viewBox="0 0 17 17"><path d="M4.500 2L8.500 5l-4 3-4-3zM12.500 2l4 3-4 3-4-3zM4.500 8l4 3-4 3-4-3zM12.500 8l4 3-4 3-4-3z" fill="#f2f2f2" transform="translate(0 -.5)" /></StatusGlyph>
        <StatusGlyph $gap={10} width="17" height="17" viewBox="0 0 17 17"><ellipse cx="8.500" cy="8.500" rx="8" ry="7" fill="#b5bccb" /><path d="M2 9c4-4 8-4 13-2" stroke="#eef" strokeWidth="2" fill="none" /></StatusGlyph>
        <StatusGlyph $gap={10} width="17" height="17" viewBox="0 0 17 17"><circle cx="8.500" cy="8.500" r="7.500" fill="#c3c8d4" /><circle cx="8.500" cy="8.500" r="2.500" fill="#555a70" /></StatusGlyph>
        <StatusGlyph $gap={13} width="17" height="17" viewBox="0 0 17 17"><path d="M2 8c1 3 3 6 7 7l1-2-2.500-2-1 .8C5.500 11 5 10 4.500 9l1-1L4 5.500z" fill="#f4f4f4" /><path d="M8 9l7-7" stroke="#666" /></StatusGlyph>
        <StatusGlyph $gap={14} width="14" height="17" viewBox="0 0 14 17"><path d="M3 4l8 8-4 4V1l4 4-8 8" stroke="#43496a" strokeWidth="1.200" fill="none" /></StatusGlyph>
        <StatusGlyph $gap={8} width="21" height="16" viewBox="0 0 21 16"><path d="M1.500 5.500c5-5 13-5 18 0M4.500 8.500c3.500-3.500 8.500-3.500 12 0M7.500 11.500c2-2 4-2 6 0" stroke="#f4f4f4" strokeWidth="1.700" fill="none" /><circle cx="10.500" cy="14" r="1.400" fill="#f4f4f4" /></StatusGlyph>
        <StatusGlyph $gap={22} width="11" height="13" viewBox="0 0 11 13"><path d="M0 4h4l6-4v13l-6-4H0z" fill="#f4f4f4" /></StatusGlyph>
        <StatusGlyph $gap={11} width="24" height="14" viewBox="0 0 24 14"><rect x="1" y="1" width="20" height="12" rx="1.500" fill="none" stroke="#f4f4f4" /><rect x="2.500" y="2.500" width="17" height="9" fill="#f4f4f4" /><path d="M12 2l-5 5.500h4l-2 4.500 6-6h-4l2-4z" fill="#23233f" /><rect x="22" y="5" width="1.500" height="4" fill="#f4f4f4" /></StatusGlyph>
        <MacItem $gap={17}>Mer 10.20</MacItem>
        <MacItem $bold $gap={20}>claudio</MacItem>
        <StatusGlyph $gap={15} width="15" height="15" viewBox="0 0 15 15"><circle cx="6" cy="6" r="4.700" fill="none" stroke="#f4f4f4" strokeWidth="1.300" /><path d="M9.500 9.500l4.500 4.500" stroke="#f4f4f4" strokeWidth="1.500" /></StatusGlyph>
        <StatusGlyph $gap={23} width="19" height="13" viewBox="0 0 19 13"><path d="M5 2h14M5 6.500h14M5 11h14" stroke="#f4f4f4" strokeWidth="1.500" /><path d="M0 2h2.500M0 6.500h2.500M0 11h2.500" stroke="#f4f4f4" strokeWidth="2" /></StatusGlyph>
      </MacBar>

      <Win>
        <TitleBar>
          <Lights>
            <Light $c="#fc5753" />
            <Light $c="#fdbc40" />
            <Light $c="#33c748" />
          </Lights>
          <XBadge>X</XBadge>
          logo-pipeline-2.svg - Inkscape
        </TitleBar>
        <MenuRow>
          {menus.map(([label, w, ls], i) => (
            <MenuItem key={i} $w={w} $ls={ls}>{label}</MenuItem>
          ))}
        </MenuRow>
        <Toolbar $h={31}>
          <Grip />
          {topTools.map((group, i) => (
            <React.Fragment key={i}>
              {i > 0 && <Sep />}
              {group.map((icon, k) => (
                <Slot key={k}>{icon}</Slot>
              ))}
            </React.Fragment>
          ))}
        </Toolbar>
        <Toolbar $h={35}>
          <Grip />
          {objectTools.map((group, i) => (
            <React.Fragment key={i}>
              {i > 0 && <Sep />}
              {group.map((icon, k) => (
                <Slot key={k}>{icon}</Slot>
              ))}
            </React.Fragment>
          ))}
          <Sep />
          <Field label="X" lw={24} w={62} text="-287,17" />
          <Field label="Y" lw={24} w={63} text="226,396" />
          <Field label="W" lw={28} w={64} text="390,931" />
          <LockSlot>
            <svg width="12" height="15" viewBox="0 0 12 15">
              <rect x="2" y="7" width="8" height="6" fill="#fff7c8" stroke="#333" />
              <path d="M3.500 7V4a2.500 2.500 0 015 0" fill="none" stroke="#333" />
            </svg>
          </LockSlot>
          <FieldLabel $w={22}>H</FieldLabel>
          <SpinBox $w={64}>
            <SpinText>395,326</SpinText>
            <SpinArrows>
              <Updown />
            </SpinArrows>
          </SpinBox>
          <Combo $w={49} $h={24} $ml={2}>
            px
            <Updown />
          </Combo>
          <Sep />
          <PropLabel>Proprietà:</PropLabel>
          <PropButtons>
            {pathModes.map((icon, i) => (
              <ToggleBtn key={i} $w={26} $h={32}>{icon}</ToggleBtn>
            ))}
          </PropButtons>
        </Toolbar>

        <Main>
          <ToolBox>
            {toolIcons.map((icon, i) => (
              <ToolCell key={i} $on={i === 0}>{icon}</ToolCell>
            ))}
          </ToolBox>
          <Center>
            <RulerRow>
              <RulerSvg width={16} height={17} />
              <HRuler />
            </RulerRow>
            <ViewRow>
              <VRuler />
              <Drawing />
              <VBarCol>
                <ArrowCell><Tri dir="u" /></ArrowCell>
                <VTrack>
                  <VThumb />
                </VTrack>
                <ArrowCell><Tri dir="d" /></ArrowCell>
              </VBarCol>
            </ViewRow>
            <HBarRow>
              <HArrow $w={15}><Tri dir="l" s={7} /></HArrow>
              <HTrack $w={1301}>
                <HThumb $x={173} $w={813} />
              </HTrack>
              <HArrow $w={14}><Tri dir="r" s={7} /></HArrow>
              <HArrow $w={24}><Tri dir="r" c="#d8d8d8" s={10} /></HArrow>
            </HBarRow>
          </Center>
          <RightBar>
            <RightGrip />
            {snapIcons.map((item, i) => (
              <SnapCell key={i} $h={item.h}>
                {item.on ? (
                  <ToggleBtn $w={26} $h={26} $tint={item.on === 'tint'}>{item.el}</ToggleBtn>
                ) : (
                  item.el
                )}
              </SnapCell>
            ))}
          </RightBar>
        </Main>

        <PaletteRow>
          <NoColor width="17" height="17" viewBox="0 0 17 17">
            <rect x="0.500" y="0.500" width="16" height="16" fill="#fff" stroke="#777" />
            <path d="M0 0l17 17M17 0L0 17" stroke="#7d2b2b" strokeWidth="1.200" />
          </NoColor>
          {ramps.map((c, i) => (
            <Swatch key={i} style={{background: c}} />
          ))}
          <PaletteChevron>
            <svg width="7" height="12" viewBox="0 0 7 12"><path d="M6 1L1.500 6 6 11" fill="none" stroke="#111" strokeWidth="1.800" /></svg>
          </PaletteChevron>
        </PaletteRow>
        <PalScroll>
          <HArrow $w={13}><Tri dir="l" s={7} /></HArrow>
          <HTrack $w={1393}>
            <HThumb $x={0} $w={286} />
          </HTrack>
          <HArrow $w={14}><Tri dir="r" s={7} /></HArrow>
        </PalScroll>
        <StatusBar>
          <StylePane>
            <span>Riempimento:</span>
            <StyleSwatch />
            <span>Contorno:</span>
            <StyleNone>Non impostato</StyleNone>
          </StylePane>
          <OpacityLabel>O:</OpacityLabel>
          <MiniSpin><Updown /></MiniSpin>
          <MiniLock>
            <svg width="10" height="13" viewBox="0 0 12 15">
              <rect x="2" y="7" width="8" height="6" fill="#eee" stroke="#ccc" />
              <path d="M3.500 7V4a2.500 2.500 0 015 0" fill="none" stroke="#ccc" />
            </svg>
          </MiniLock>
          <Combo $w={73} $h={22} $pl={12}>
            (root)
            <Updown />
          </Combo>
          <Message>
            <b>Maiusc:</b> fare clic per commutare selezione, trascinare per usare la selezione ad elastico
          </Message>
          <CoordPane>
            <span>X:</span>
            <span>550,26</span>
            <span>Y:</span>
            <span>442,35</span>
          </CoordPane>
          <ZoomLabel>Z:</ZoomLabel>
          <SpinBox $w={55}>
            <SpinText $right>112%</SpinText>
            <SpinArrows>
              <Updown />
            </SpinArrows>
          </SpinBox>
          <CornerGrip width="14" height="14" viewBox="0 0 14 14">
            <path d="M13 3L3 13M13 7l-6 6M13 11l-2 2" stroke="#bbb" />
          </CornerGrip>
        </StatusBar>
      </Win>

      <Dock>
        {dockApps.map(app => (
          <DockItem key={app.key}>
            {app.el}
            {app.dot && <DockDot />}
          </DockItem>
        ))}
        <DockDivider />
        {dockStacks.map(item => (
          <DockItem key={item.key}>
            {item.el}
            {item.bar && <DockBar />}
          </DockItem>
        ))}
      </Dock>
    </Screen>
  );
}
